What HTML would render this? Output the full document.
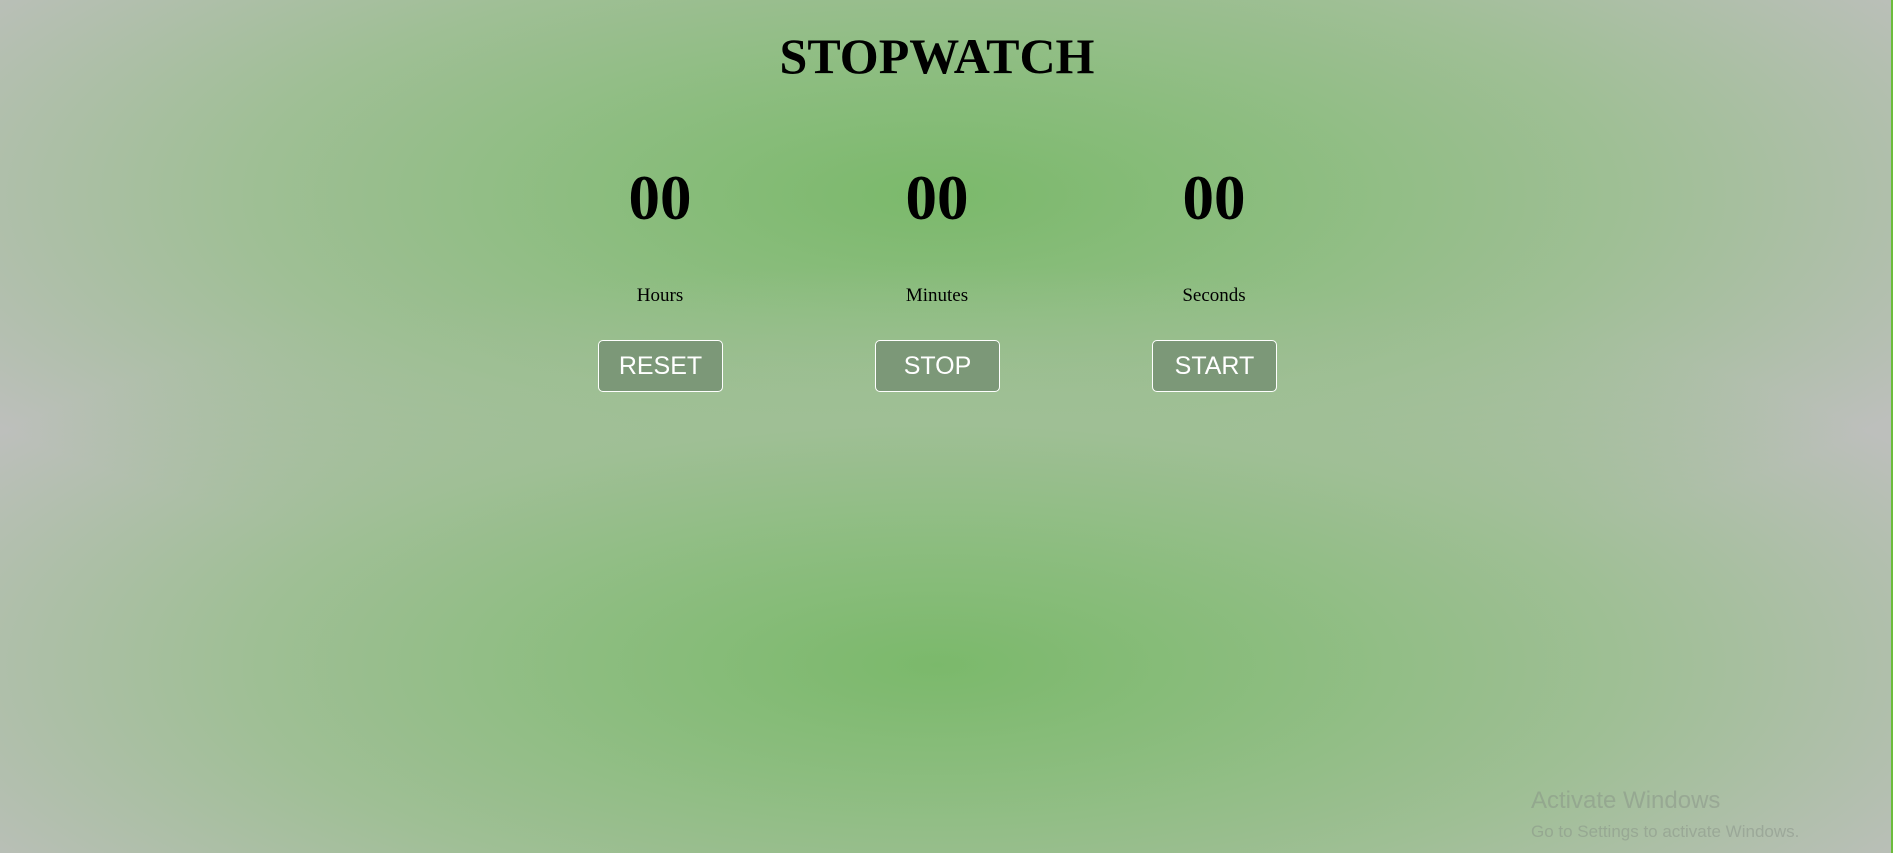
<!DOCTYPE html>
<html><head><meta charset="utf-8"><style>
html,body{margin:0;width:1893px;height:853px;overflow:hidden}
body{position:relative;background:
radial-gradient(ellipse 1150px 400px at 937px 665px, #7bb96b 0%, #8cbd7f 30%, #9fbf95 60%, rgba(190,190,190,0) 100%),
radial-gradient(ellipse 1150px 400px at 937px 195px, #7bb96b 0%, #8cbd7f 30%, #9fbf95 60%, rgba(190,190,190,0) 100%),
#bdbfbc;font-family:"Liberation Serif",serif}
.edge{position:absolute;right:0;top:0;width:2px;height:853px;background:#6cbc3c}
h1{position:absolute;top:26px;left:0;width:1874px;text-align:center;margin:0;font-size:50px;font-weight:bold;line-height:60px}
.col{position:absolute;width:200px;text-align:center}
.num{top:160px;font-size:63px;font-weight:bold;line-height:76px}
.lab{top:284px;font-size:19px;line-height:24px}
.btn{position:absolute;top:340px;width:123px;height:50px;border:1px solid #fff;border-radius:5px;background:#7c9878;color:#fff;font-family:"Liberation Sans",sans-serif;font-size:25px;line-height:50px;text-align:center}
.aw{position:absolute;left:1531px;top:787px;color:rgba(130,140,130,0.45);font-family:"Liberation Sans",sans-serif;font-size:24px}
.aw2{position:absolute;left:1531px;top:822px;color:rgba(130,140,130,0.45);font-family:"Liberation Sans",sans-serif;font-size:17px}
</style></head><body>
<h1>STOPWATCH</h1>
<div class="col num" style="left:560px">00</div>
<div class="col num" style="left:837px">00</div>
<div class="col num" style="left:1114px">00</div>
<div class="col lab" style="left:560px">Hours</div>
<div class="col lab" style="left:837px">Minutes</div>
<div class="col lab" style="left:1114px">Seconds</div>
<div class="btn" style="left:598px">RESET</div>
<div class="btn" style="left:875px">STOP</div>
<div class="btn" style="left:1152px">START</div>
<div class="aw">Activate Windows</div>
<div class="aw2">Go to Settings to activate Windows.</div>
<div class="edge"></div>
</body></html>
